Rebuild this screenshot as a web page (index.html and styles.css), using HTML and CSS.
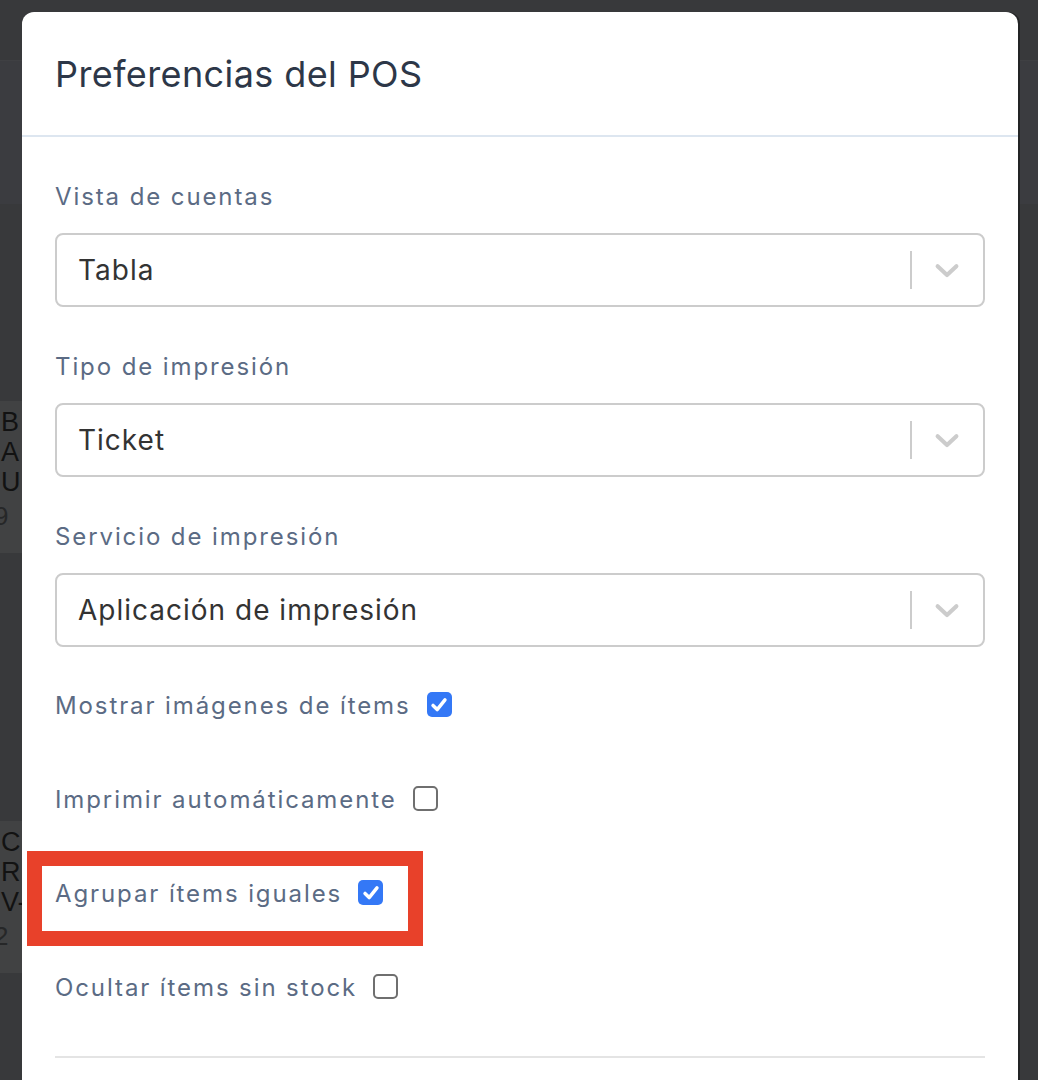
FILE: index.html
```html
<!DOCTYPE html>
<html lang="es">
<head>
  <meta charset="UTF-8">
  <meta name="viewport" content="width=device-width, initial-scale=1.0">
  <title>Preferencias del POS</title>
  <link rel="stylesheet" href="styles.css">
</head>
<body>
  <!-- Pagina de fondo (detras del overlay) -->
  <div class="page">
    <div class="page-top"></div>
    <div class="page-band"></div>
    <div class="page-list">
      <div class="bg-card card-one">
        <p>B<br>A<br>U</p>
        <span>9</span>
      </div>
      <div class="bg-card card-two">
        <p>C<br>R<br>V-</p>
        <span>2</span>
      </div>
    </div>
  </div>

  <!-- Modal de preferencias -->
  <div class="modal">
    <div class="modal-header">
      <h1>Preferencias del POS</h1>
    </div>

    <div class="modal-body">
      <div class="field">
        <label class="field-label">Vista de cuentas</label>
        <div class="select">
          <span class="select-value">Tabla</span>
          <div class="select-indicator">
            <span class="select-sep"></span>
            <svg class="chevron" viewBox="0 0 24 24" width="30" height="30"><path d="M4.5 9 L12 16 L19.5 9" fill="none" stroke="#cccccc" stroke-width="3.3" stroke-linecap="round" stroke-linejoin="round"/></svg>
          </div>
        </div>
      </div>

      <div class="field">
        <label class="field-label">Tipo de impresión</label>
        <div class="select">
          <span class="select-value">Ticket</span>
          <div class="select-indicator">
            <span class="select-sep"></span>
            <svg class="chevron" viewBox="0 0 24 24" width="30" height="30"><path d="M4.5 9 L12 16 L19.5 9" fill="none" stroke="#cccccc" stroke-width="3.3" stroke-linecap="round" stroke-linejoin="round"/></svg>
          </div>
        </div>
      </div>

      <div class="field">
        <label class="field-label">Servicio de impresión</label>
        <div class="select">
          <span class="select-value">Aplicación de impresión</span>
          <div class="select-indicator">
            <span class="select-sep"></span>
            <svg class="chevron" viewBox="0 0 24 24" width="30" height="30"><path d="M4.5 9 L12 16 L19.5 9" fill="none" stroke="#cccccc" stroke-width="3.3" stroke-linecap="round" stroke-linejoin="round"/></svg>
          </div>
        </div>
      </div>

      <div class="checks">
        <div class="check-row">
          <span class="field-label">Mostrar imágenes de ítems</span>
          <span class="box checked"><svg viewBox="0 0 24 24" width="22" height="22"><path d="M5.5 12.5 L10 17 L18.5 6.5" fill="none" stroke="#fff" stroke-width="3.8" stroke-linecap="round" stroke-linejoin="round"/></svg></span>
        </div>
        <div class="check-row">
          <span class="field-label">Imprimir automáticamente</span>
          <span class="box"></span>
        </div>
        <div class="check-row highlight">
          <span class="field-label">Agrupar ítems iguales</span>
          <span class="box checked"><svg viewBox="0 0 24 24" width="22" height="22"><path d="M5.5 12.5 L10 17 L18.5 6.5" fill="none" stroke="#fff" stroke-width="3.8" stroke-linecap="round" stroke-linejoin="round"/></svg></span>
        </div>
        <div class="check-row">
          <span class="field-label">Ocultar ítems sin stock</span>
          <span class="box"></span>
        </div>
      </div>

      <hr class="divider">
    </div>
  </div>
</body>
</html>
```

FILE: styles.css
```css
html, body {
  margin: 0;
  padding: 0;
}
body {
  width: 1038px;
  height: 1080px;
  overflow: hidden;
  background-color: #38393b;
  font-family: 'Inter', 'Liberation Sans', sans-serif;
  position: relative;
}

/* Fondo */
.page {
  height: 100%;
}
.page-top {
  height: 60px;
}
.page-band {
  height: 143px;
  background-color: #3b3c40;
  border-top: 1px solid #3f4043;
}
.page-list {
  padding-top: 197px;
}
.bg-card {
  width: 22px;
  height: 152px;
  background-color: #414243;
  overflow: hidden;
  color: #121212;
  font-family: 'Liberation Sans', sans-serif;
}
.bg-card p {
  margin: 6px 0 0 1px;
  font-size: 27px;
  line-height: 30px;
}
.bg-card span {
  display: block;
  margin-top: 4px;
  font-size: 26px;
  color: #262728;
  text-indent: -6px;
}
.card-two {
  margin-top: 268px;
}

/* Modal */
.modal {
  position: absolute;
  left: 22px;
  top: 12px;
  width: 996px;
  height: 1100px;
  background-color: #fff;
  border-radius: 12px 12px 0 0;
  box-shadow: 2px 0 0 #232425;
}
.modal-header {
  height: 123px;
  padding: 0 33px;
  display: flex;
  align-items: center;
  border-bottom: 2px solid #dde6f0;
}
.modal-header h1 {
  margin: 0;
  font-size: 36px;
  font-weight: 400;
  color: #2d3748;
  letter-spacing: 0.4px;
}
.modal-body {
  padding: 42px 33px 0 33px;
}
.field {
  margin-bottom: 42px;
}
.field-label {
  display: block;
  font-size: 24px;
  line-height: 36px;
  color: #5b6b84;
  letter-spacing: 1.9px;
}
.field > .field-label {
  margin-bottom: 18px;
}
.select {
  height: 70px;
  border: 2px solid #cccccc;
  border-radius: 8px;
  display: flex;
  align-items: center;
  justify-content: space-between;
}
.select-value {
  padding-left: 21px;
  font-size: 28px;
  color: #333;
  letter-spacing: 1px;
}
.select-indicator {
  display: flex;
  align-items: center;
  height: 100%;
}
.select-sep {
  width: 2px;
  height: 38px;
  background-color: #cccccc;
}
.chevron {
  margin: 0 21px 0 20px;
}

/* Checkboxes */
.checks {
  display: flex;
  flex-direction: column;
  gap: 58px;
  margin-top: -1px;
}
.check-row {
  display: flex;
  align-items: center;
  gap: 16px;
  height: 36px;
  position: relative;
}
.check-row .field-label {
  display: inline-block;
}
.box {
  width: 21px;
  height: 21px;
  border: 2px solid #6f6f6f;
  border-radius: 5px;
  display: flex;
  align-items: center;
  justify-content: center;
  margin-top: -3px;
}
.box.checked {
  width: 25px;
  height: 25px;
  border: none;
  background-color: #3478f6;
}
.highlight::before {
  content: "";
  position: absolute;
  left: -28px;
  top: -25px;
  width: 366px;
  height: 65px;
  border: 15px solid #e8412a;
}
.divider {
  margin: 50px 0 0 0;
  border: none;
  height: 2px;
  background-color: #e4e4e4;
}
```
